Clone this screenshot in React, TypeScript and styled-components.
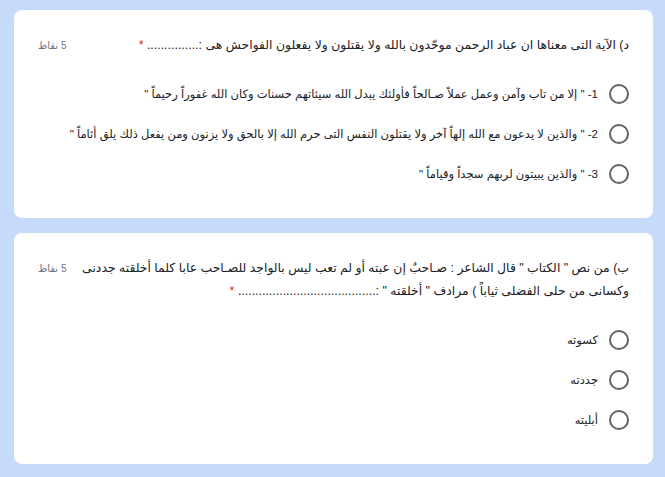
import { FC } from "react";
import styled, { createGlobalStyle } from "styled-components";

interface IQuestion {
  id: string;
  title: string;
  points: string;
  options: string[];
}

const questions: IQuestion[] = [
  {
    id: "q1",
    title:
      "د) الآية التى معناها ان عباد الرحمن موحّدون بالله ولا يقتلون ولا يفعلون الفواحش هى :...............",
    points: "5 نقاط",
    options: [
      '1- " إلا من تاب وآمن وعمل عملاً صـالحاً فأولئك يبدل الله سيئاتهم حسنات وكان الله غفوراً رحيماً "',
      '2- " والذين لا يدعون مع الله إلهاً آخر ولا يقتلون النفس التى حرم الله إلا بالحق ولا يزنون ومن يفعل ذلك يلق أثاماً "',
      '3- " والذين يبيتون لربهم سجداً وقياماً "',
    ],
  },
  {
    id: "q2",
    title:
      'ب) من نص " الكتاب " قال الشاعر : صـاحبٌ إن عبته أو لم تعب ليس بالواجد للصـاحب عابا كلما أخلقته جددنى وكسانى من حلى الفضلى ثياباً ) مرادف " أخلقته " :........................................',
    points: "5 نقاط",
    options: ["كسوته", "جددته", "أبليته"],
  },
];

const App: FC = () => {
  return (
    <>
      <GlobalStyle />
      <Page dir="rtl">
        {questions.map((q) => (
          <Card key={q.id}>
            <Header>
              <Title>
                {q.title} <Star>*</Star>
              </Title>
              <Points>{q.points}</Points>
            </Header>
            <Options>
              {q.options.map((opt) => (
                <Option key={opt}>
                  <Radio />
                  <Label>{opt}</Label>
                </Option>
              ))}
            </Options>
          </Card>
        ))}
      </Page>
    </>
  );
};

export default App;

const GlobalStyle = createGlobalStyle`
  html, body {
    margin: 0;
    padding: 0;
    background: #c6dafc;
  }
  body {
    font-family: "Liberation Sans", "DejaVu Sans", sans-serif;
    color: #202124;
  }
`;

const Page = styled.div`
  display: flex;
  flex-direction: column;
  gap: 15px;
  padding: 10px 12px 12px 14px;
  width: 639px;
  min-height: 477px;
  box-sizing: content-box;
`;

const Card = styled.div`
  background: #fff;
  border-radius: 8px;
  padding: 24px;
  display: flex;
  flex-direction: column;
  gap: 17px;
`;

const Header = styled.div`
  display: flex;
  align-items: flex-start;
  gap: 6px;
`;

const Title = styled.div`
  flex: 1;
  font-size: 12.4px;
  line-height: 23px;
  color: #202124;
`;

const Star = styled.span`
  color: #d93025;
`;

const Points = styled.div`
  flex: 0 0 auto;
  font-size: 10px;
  line-height: 23px;
  color: #70757a;
`;

const Options = styled.div`
  display: flex;
  flex-direction: column;
`;

const Option = styled.label`
  display: flex;
  align-items: center;
  height: 40px;
  gap: 11px;
`;

const Radio = styled.span`
  flex: 0 0 auto;
  width: 20px;
  height: 20px;
  border: 2px solid #5f6368;
  border-radius: 50%;
  box-sizing: border-box;
`;

const Label = styled.span`
  font-size: 11.5px;
  color: #202124;
`;
